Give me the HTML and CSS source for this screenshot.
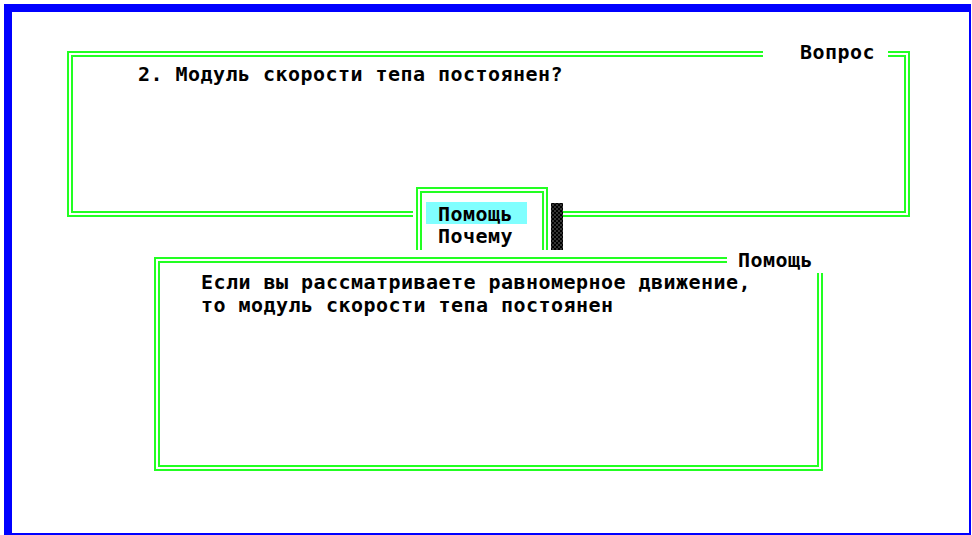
FILE: index.html
```html
<!DOCTYPE html>
<html lang="ru">
<head>
<meta charset="utf-8">
<title>Вопрос</title>
<link rel="stylesheet" href="styles.css">
</head>
<body>
<div class="screen">
  <section class="win win-question">
    <h2 class="win-title title-question">Вопрос</h2>
    <p class="question-text">2. Модуль скорости тепа постоянен?</p>
  </section>

  <nav class="menu">
    <div class="menu-frame">
      <div class="menu-item is-active">Помощь</div>
      <div class="menu-item">Почему</div>
    </div>
    <div class="scrollbar"></div>
  </nav>

  <section class="win-help">
    <div class="win help-frame">
      <h2 class="win-title title-help">Помощь</h2>
      <div class="help-text">
        <p class="line">Если вы рассматриваете равномерное движение,</p>
        <p class="line">то модуль скорости тепа постоянен</p>
      </div>
    </div>
  </section>
</div>
</body>
</html>
```

FILE: styles.css
```css
html, body {
  margin: 0;
  padding: 0;
  background: #fff;
}

body {
  font-family: "DejaVu Sans Mono", "Liberation Mono", monospace;
  font-weight: bold;
  font-size: 20px;
  letter-spacing: 0.46px;
  color: #000;
}

.screen {
  position: relative;
  width: 972px;
  height: 535px;
  overflow: hidden;
  background: #fff;
}

/* blue screen border */
.screen::before {
  content: "";
  position: absolute;
  left: 4px;
  top: 4px;
  width: 967px;
  height: 531px;
  box-sizing: border-box;
  border-style: solid;
  border-color: #0000ff;
  border-width: 8px 2px 2px 8px;
}

/* double-line text-mode frame */
.win {
  box-sizing: border-box;
  border: 6px double #22ff22;
  background: #fff;
}

.win-title {
  position: absolute;
  margin: 0;
  box-sizing: border-box;
  background: #fff;
  font-size: 20px;
  font-weight: bold;
  line-height: 22px;
  height: 22px;
  white-space: pre;
}

/* question window */
.win-question {
  position: absolute;
  left: 67px;
  top: 51px;
  width: 843px;
  height: 166px;
  padding: 6px 0 0 65px;
}

.title-question {
  left: 690px;
  top: -16px;
  width: 125px;
  padding-left: 37px;
}

.question-text {
  margin: 0;
  line-height: 22px;
  white-space: pre;
}

/* popup menu */
.menu {
  position: absolute;
  left: 413px;
  top: 181px;
  width: 150px;
  height: 69px;
  background: #fff;
  display: flex;
  align-items: flex-start;
  gap: 3px;
  overflow: hidden;
}

.menu-frame {
  box-sizing: border-box;
  margin: 6px 0 0 3px;
  width: 132px;
  height: 80px;
  border: 6px double #22ff22;
  border-bottom: none;
  padding: 9px 0 0 4px;
}

.menu-item {
  width: 101px;
  height: 22px;
  box-sizing: border-box;
  padding-left: 12px;
  line-height: 24px;
  white-space: pre;
}

.menu-item.is-active {
  background: #80ffff;
}

/* dark shade thumb of the menu scroll bar */
.scrollbar {
  margin-top: 22px;
  width: 12px;
  height: 47px;
  background-color: #000;
  background-image:
    radial-gradient(circle, #ddd 0 0.4px, transparent 0.8px),
    radial-gradient(circle, #ddd 0 0.4px, transparent 0.8px);
  background-size: 4px 4px, 4px 4px;
  background-position: 0 0, 2px 2px;
}

/* help window */
.win-help {
  position: absolute;
  left: 147px;
  top: 250px;
  padding: 7px;
  background: #fff;
}

.help-frame {
  position: relative;
  width: 669px;
  height: 214px;
  padding: 8px 0 0 41px;
}

.title-help {
  left: 567px;
  top: -14px;
  width: 97px;
  height: 24px;
  padding-left: 11px;
}

.help-text .line {
  margin: 0;
  line-height: 23px;
  white-space: pre;
}
```
